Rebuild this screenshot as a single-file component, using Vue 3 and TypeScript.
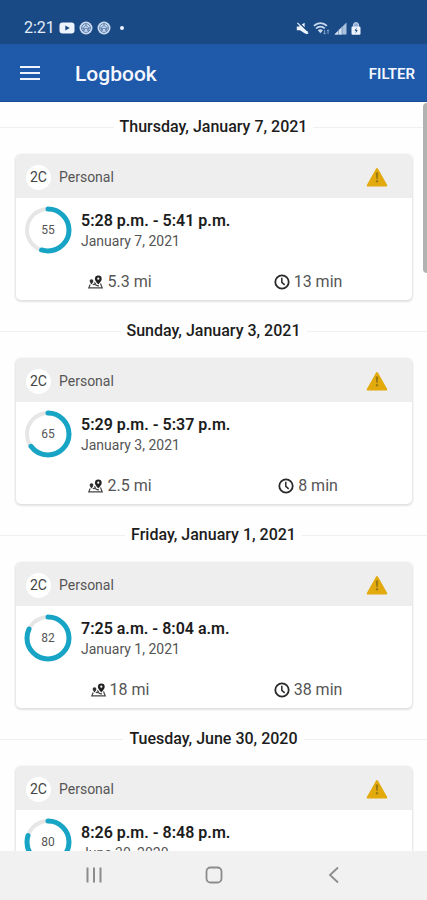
<script setup lang="ts">
interface Trip {
  id: number
  heading: string
  vehicle: string
  category: string
  score: number
  time: string
  date: string
  distance?: string
  duration?: string
}

const trips: Trip[] = [
  { id: 1, heading: 'Thursday, January 7, 2021', vehicle: '2C', category: 'Personal', score: 55, time: '5:28 p.m. - 5:41 p.m.', date: 'January 7, 2021', distance: '5.3 mi', duration: '13 min' },
  { id: 2, heading: 'Sunday, January 3, 2021', vehicle: '2C', category: 'Personal', score: 65, time: '5:29 p.m. - 5:37 p.m.', date: 'January 3, 2021', distance: '2.5 mi', duration: '8 min' },
  { id: 3, heading: 'Friday, January 1, 2021', vehicle: '2C', category: 'Personal', score: 82, time: '7:25 a.m. - 8:04 a.m.', date: 'January 1, 2021', distance: '18 mi', duration: '38 min' },
  { id: 4, heading: 'Tuesday, June 30, 2020', vehicle: '2C', category: 'Personal', score: 80, time: '8:26 p.m. - 8:48 p.m.', date: 'June 30, 2020' },
]
</script>

<template>
  <div class="screen">
    <div class="status">
      <div class="status-group">
        <span class="clock">2:21</span>
        <svg width="16" height="12" viewBox="0 0 16 12">
          <rect x="0.5" y="0.5" width="15" height="11" rx="3" fill="#eef4fd" />
          <path d="M6.3 3.4v5.2L10.8 6z" fill="#1a4a86" />
        </svg>
        <svg v-for="n in 2" :key="n" width="14" height="14" viewBox="0 0 14 14">
          <circle cx="7" cy="7" r="6.5" fill="#c9d9ee" />
          <g fill="none" stroke="#5579ab" stroke-width="0.9">
            <circle cx="7" cy="7" r="4.4" />
            <path d="M4.4 9.8V6.6L7 4.4l2.6 2.2v3.2M7 2.6v2M5.6 9.8V7.4h2.8v2.4M2.8 6.6l1.6 1M11.2 6.6l-1.6 1" />
          </g>
        </svg>
        <span class="dot"></span>
      </div>
      <div class="status-group status-right">
        <svg width="13" height="13" viewBox="0 0 13 13">
          <path d="M0.8 4.6h2.4l1.6-1.2 5.4 5.4 1.8 0.8-1.200 2.600-2.600-1.200L4 8.2H0.800z" fill="#eef4fd" />
          <path d="M5.800 2.400L8.600 0.800v4.400z" fill="#eef4fd" />
          <path d="M1.400 0.800l10.800 10.800" stroke="#eef4fd" stroke-width="1.200" />
        </svg>
        <svg width="17" height="13" viewBox="0 0 17 13">
          <g fill="none" stroke="#c9d9ee" stroke-width="1.7">
            <path d="M0.9 3.9c3.6-3.7 9.4-3.7 13 0" />
            <path d="M3 6.5c2.4-2.5 6.4-2.5 8.8 0" />
          </g>
          <path d="M4.8 8.3c1.5-1.5 3.7-1.5 5.2 0L7.4 11.2z" fill="#c9d9ee" />
          <path d="M11.6 8v4M10.4 10.8l1.2 1.4 1.2-1.4M15 12V8M13.8 9.2L15 7.8l1.2 1.4" fill="none" stroke="#86a5d0" stroke-width="0.9" />
        </svg>
        <svg width="13" height="13" viewBox="0 0 13 13">
          <path d="M0.5 12.5L12.5 0.5v12z" fill="#a9c0df" />
          <path d="M0.5 12.5L8 5v7.5z" fill="#d3e0f2" />
          <path d="M4.500 7v6M8 4v9" stroke="#5579ab" stroke-width="0.6" />
        </svg>
        <svg width="10" height="13" viewBox="0 0 10 13">
          <path d="M2.4 5V3.2a2.6 2.6 0 0 1 5.2 0V5" fill="#8dabd4" stroke="#c9d9ee" stroke-width="1" />
          <rect x="0.5" y="4.500" width="9" height="8.300" rx="1.200" fill="#eef4fd" />
          <path d="M5.800 5.400L3.400 8.800h1.700l-0.800 2.800 2.600-3.600H5.200z" fill="#1a4a86" />
        </svg>
      </div>
    </div>

    <header class="appbar">
      <button class="menu" type="button" aria-label="Menu">
        <svg width="20" height="16" viewBox="0 0 20 16">
          <path d="M0 2h20M0 8h20M0 14h20" stroke="#eef4fd" stroke-width="2" />
        </svg>
      </button>
      <h1>Logbook</h1>
      <button class="filter" type="button">FILTER</button>
    </header>

    <div class="content">
      <main class="list">
        <section v-for="trip in trips" :key="trip.id" class="day">
          <h2>{{ trip.heading }}</h2>
          <article class="card">
            <div class="card-head">
              <span class="vehicle">{{ trip.vehicle }}</span>
              <span class="category">{{ trip.category }}</span>
              <svg width="22" height="20" viewBox="0 0 22 20">
                <path d="M11 2L20.3 18.500H1.700z" fill="#e2aa0d" stroke="#e2aa0d" stroke-width="2" stroke-linejoin="round" />
                <path d="M9.700 5.500h2.600l-0.600 6.500h-1.400z" fill="#9c7a14" />
                <circle cx="11" cy="14.300" r="1.200" fill="#9c7a14" />
              </svg>
            </div>
            <div class="summary">
              <div class="score">
                <svg width="48" height="48" viewBox="0 0 48 48">
                  <circle cx="24" cy="24" r="21" fill="none" stroke="#e6e6e6" stroke-width="4" />
                  <circle
                    cx="24" cy="24" r="21" fill="none" stroke="#18a5c5" stroke-width="5" stroke-linecap="round"
                    pathLength="100" :stroke-dasharray="`${trip.score} 100`" transform="rotate(-90 24 24)"
                  />
                </svg>
                <span>{{ trip.score }}</span>
              </div>
              <div class="when">
                <strong>{{ trip.time }}</strong>
                <span>{{ trip.date }}</span>
              </div>
            </div>
            <div v-if="trip.distance" class="stats">
              <div class="stat">
                <svg width="15" height="14" viewBox="0 0 15 14">
                  <path d="M10.3 0.5a3.4 3.4 0 0 1 3.4 3.4c0 2.1-3.4 5.3-3.4 5.3S6.900 6 6.900 3.900a3.400 3.400 0 0 1 3.400-3.400z" fill="#222" />
                  <circle cx="10.3" cy="3.7" r="1.100" fill="#fff" />
                  <path d="M3.500 4.200a1.900 1.900 0 0 1 1.900 1.900c0 1.400-1.900 3.300-1.900 3.300S1.600 7.500 1.600 6.100a1.900 1.900 0 0 1 1.900-1.900z" fill="#333" />
                  <path d="M2.200 9.600L0.800 12.800h13.400l-1.700-4.200M4.800 9.600c2.600-1.400 2.400 1.400 6.200 1.300M6.400 7.400l1.200 1.800" fill="none" stroke="#444" stroke-width="1.200" />
                </svg>
                <span>{{ trip.distance }}</span>
              </div>
              <div class="stat">
                <svg width="16" height="16" viewBox="0 0 16 16">
                  <circle cx="8" cy="8" r="6.700" fill="none" stroke="#2a2a2a" stroke-width="1.800" />
                  <path d="M7.800 3.800v4.500l2.900 2.600" fill="none" stroke="#2a2a2a" stroke-width="1.500" />
                </svg>
                <span>{{ trip.duration }}</span>
              </div>
            </div>
          </article>
        </section>
      </main>
      <div class="thumb"></div>
    </div>

    <nav class="system-nav">
      <button type="button" aria-label="Recent apps">
        <svg width="18" height="18" viewBox="0 0 18 18">
          <path d="M2.500 1.500v15M9 1.500v15M15.500 1.500v15" stroke="#8c8c8c" stroke-width="2" />
        </svg>
      </button>
      <button type="button" aria-label="Home">
        <svg width="18" height="18" viewBox="0 0 18 18">
          <rect x="1.500" y="1.500" width="15" height="15" rx="4" fill="none" stroke="#8c8c8c" stroke-width="1.800" />
        </svg>
      </button>
      <button type="button" aria-label="Back">
        <svg width="18" height="18" viewBox="0 0 18 18">
          <path d="M14 1.500L6 9l8 7.500" fill="none" stroke="#8c8c8c" stroke-width="1.800" />
        </svg>
      </button>
    </nav>
  </div>
</template>

<style>
body {
  margin: 0;
}
</style>

<style scoped>
.screen {
  display: flex;
  flex-direction: column;
  height: 100vh;
  overflow: hidden;
  background: #fefefe;
  font-family: Roboto, "Liberation Sans", sans-serif;
  color: #1c1c1c;
}

svg {
  display: block;
  flex: none;
}

button {
  display: flex;
  align-items: center;
  justify-content: center;
  border: 0;
  padding: 0;
  background: none;
  font-family: inherit;
  cursor: pointer;
}

.status {
  display: flex;
  flex: none;
  align-items: center;
  justify-content: space-between;
  box-sizing: border-box;
  height: 44px;
  padding: 12px 66px 0 24px;
  background: #1a4a86;
}

.status-group {
  display: flex;
  align-items: center;
  gap: 4px;
}

.clock {
  color: #e4edf9;
  font-size: 16px;
  line-height: 20px;
}

.dot {
  width: 4px;
  height: 4px;
  margin-left: 5px;
  border-radius: 50%;
  background: #eef4fd;
}

.appbar {
  display: flex;
  flex: none;
  align-items: center;
  box-sizing: border-box;
  height: 58px;
  padding: 0 12px 0 20px;
  border-bottom: 1px solid #174c96;
  background: #1f59a9;
}

h1 {
  flex: 1;
  margin: 0;
  padding: 2px 0 0 35px;
  color: #f4f8fe;
  font-size: 21px;
  line-height: 28px;
  font-weight: 500;
}

.filter {
  padding-top: 2px;
  color: #f4f8fe;
  font-size: 15px;
  line-height: 20px;
  font-weight: 600;
}

.content {
  position: relative;
  flex: 1;
  min-height: 0;
}

.list {
  height: 100%;
  overflow-y: auto;
  scrollbar-width: none;
}

.thumb {
  position: absolute;
  top: 1px;
  right: 0;
  width: 4px;
  height: 170px;
  border-radius: 4px 0 0 4px;
  background: #b2b2b2;
}

.day {
  padding-bottom: 6px;
}

h2 {
  display: flex;
  align-items: center;
  gap: 6px;
  height: 50px;
  margin: 0 0 2px;
  font-size: 16px;
  line-height: 20px;
  font-weight: 500;
}

h2::before,
h2::after {
  flex: 1;
  height: 1px;
  background: #f0f0f0;
  content: "";
}

.card {
  height: 146px;
  margin: 0 15px 0 16px;
  border-radius: 5px;
  background: #fff;
  box-shadow: 0 1px 2px 1px #e2e2e2;
}

.card-head {
  display: flex;
  align-items: center;
  box-sizing: border-box;
  height: 44px;
  padding: 2px 24px 0 10px;
  border-radius: 5px 5px 0 0;
  background: #eee;
}

.vehicle {
  display: flex;
  align-items: center;
  justify-content: center;
  width: 25px;
  height: 25px;
  border-radius: 50%;
  background: #fff;
  color: #444;
  font-size: 14px;
}

.category {
  flex: 1;
  padding-left: 8px;
  color: #555;
  font-size: 14px;
}

.summary {
  display: flex;
  gap: 8px;
  padding: 8px 8px 0;
}

.score {
  display: grid;
  place-items: center;
}

.score > * {
  grid-area: 1 / 1;
}

.score span {
  color: #555;
  font-size: 12px;
}

.when {
  display: flex;
  flex-direction: column;
  padding: 5px 0 0 1px;
}

.when strong {
  font-size: 16px;
  line-height: 20px;
  font-weight: 600;
}

.when span {
  color: #555;
  font-size: 14px;
  line-height: 20px;
}

.stats {
  display: grid;
  grid-template-columns: 1fr 1fr;
  padding: 18px 10px 0;
}

.stat {
  display: flex;
  align-items: center;
  justify-content: center;
  gap: 4px;
  color: #555;
  font-size: 16px;
  line-height: 20px;
}

.system-nav {
  display: flex;
  flex: none;
  align-items: flex-start;
  justify-content: center;
  height: 49px;
  padding: 0 34px;
  background: #f1f1f1;
}

.system-nav button {
  flex: 1;
  height: 47px;
}
</style>
